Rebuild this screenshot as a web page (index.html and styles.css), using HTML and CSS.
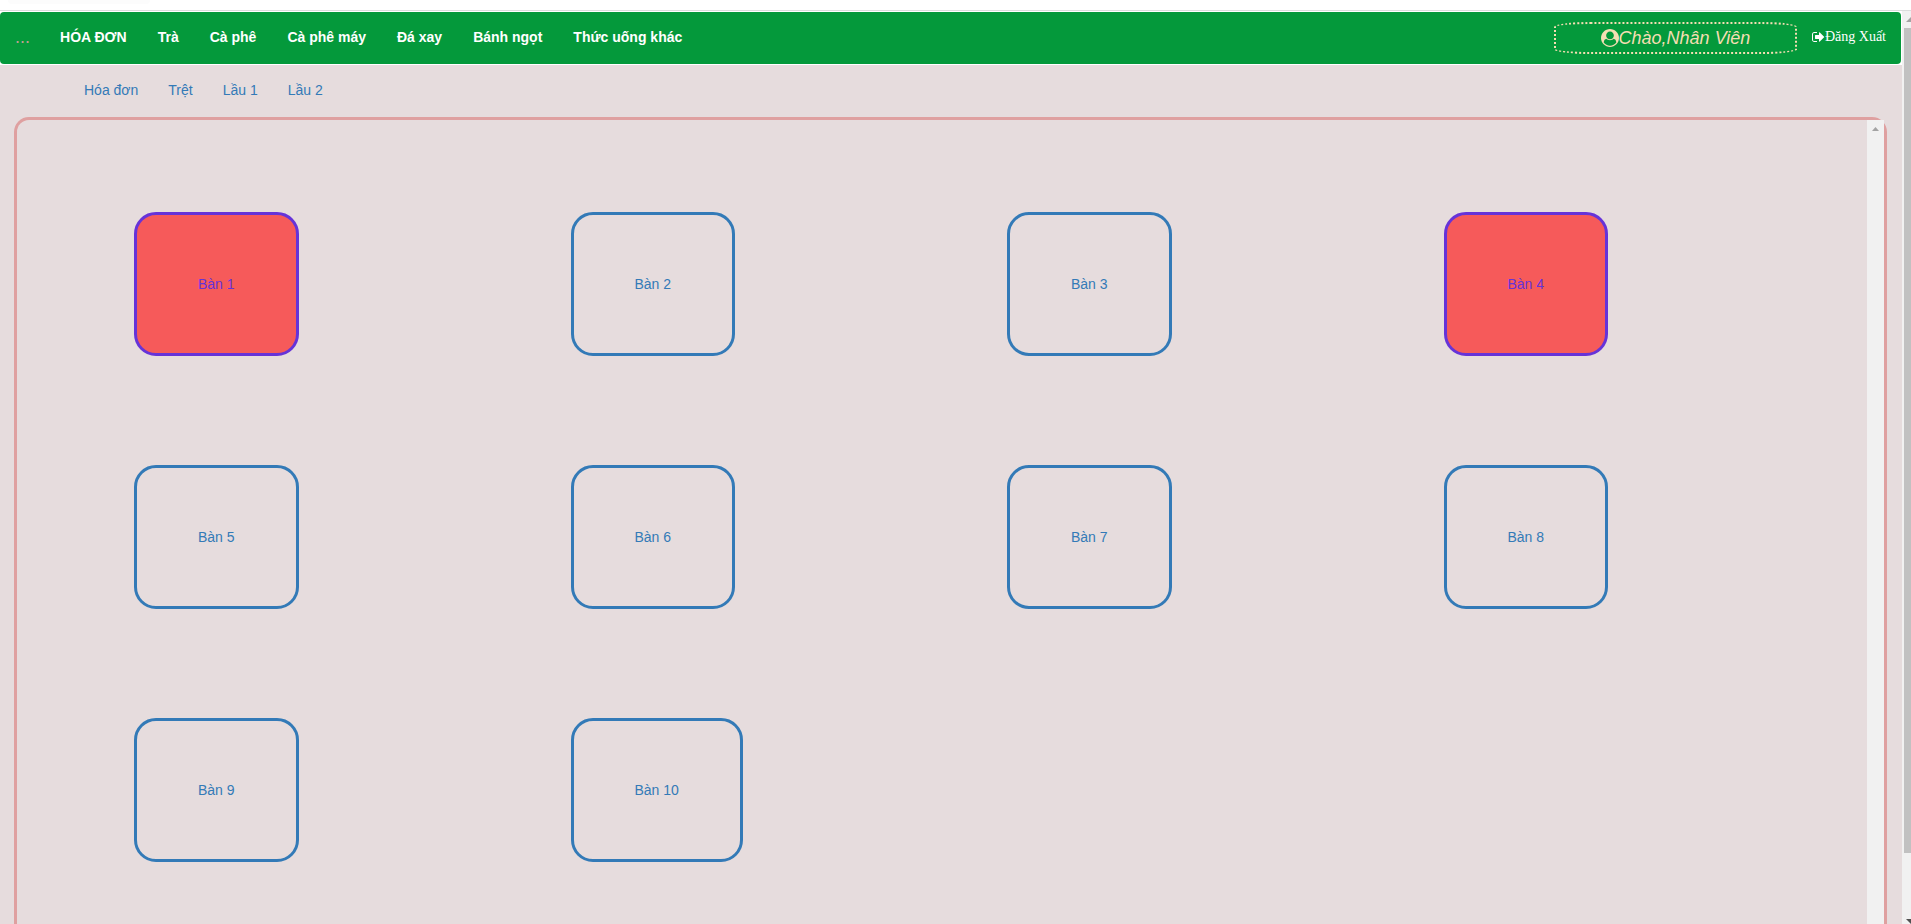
FILE: index.html
```
<!DOCTYPE html>
<html lang="vi">
<head>
    <meta charset="UTF-8">
    <meta name="viewport" content="width=device-width, initial-scale=1.0">
    <title>Nhân Viên</title>
    <link rel="stylesheet" href="styles.css">
</head>
<body>

    <div class="top-strip">
        <div class="top-tab"></div>
    </div>

    <div class="window">
        <div class="page">
            <!-- Navigation Bar -->
            <div class="navbar-wrap">
                <nav class="navbar">
                    <a class="brand" href="#">...</a>
                    <ul class="menu">
                        <li><a href="#">HÓA ĐƠN</a></li>
                        <li><a href="#">Trà</a></li>
                        <li><a href="#">Cà phê</a></li>
                        <li><a href="#">Cà phê máy</a></li>
                        <li><a href="#">Đá xay</a></li>
                        <li><a href="#">Bánh ngọt</a></li>
                        <li><a href="#">Thức uống khác</a></li>
                    </ul>
                    <div class="user">
                        <svg class="user-icon" viewBox="0 0 1792 1792"><path d="M1523 1339q-22-155-87.5-257.5t-184.5-118.5q-67 74-159.5 115.5t-195.5 41.5-195.5-41.5-159.5-115.5q-119 16-184.5 118.5t-87.5 257.5q106 150 271 237.5t356 87.5 356-87.5 271-237.5zm-243-699q0-159-112.5-271.5t-271.5-112.5-271.5 112.5-112.5 271.5 112.5 271.5 271.5 112.5 271.5-112.5 112.5-271.5zm512 256q0 182-71 347.5t-190.5 286-285.5 191.5-349 71q-182 0-348-71t-286-191-191-286-71-348 71-348 191-286 286-191 348-71 348 71 286 191 191 286 71 348z"/></svg>
                        <span>Chào,Nhân Viên</span>
                    </div>
                    <a class="logout" href="#">
                        <svg class="logout-icon" viewBox="64 0 1664 1792"><path d="M704 1440q0 4 1 20t.5 26.5-3 23.5-10 19.5-20.5 6.5h-320q-119 0-203.5-84.5t-84.5-203.5v-704q0-119 84.5-203.5t203.5-84.5h320q13 0 22.5 9.5t9.5 22.5q0 4 1 20t.5 26.5-3 23.5-10 19.5-20.5 6.5h-320q-66 0-113 47t-47 113v704q0 66 47 113t113 47h312l11.5 1 11.5 3 8 5.5 7 9 2 13.5zm928-544q0 26-19 45l-544 544q-19 19-45 19t-45-19-19-45v-288h-448q-26 0-45-19t-19-45v-384q0-26 19-45t45-19h448v-288q0-26 19-45t45-19 45 19l544 544q19 19 19 45z"/></svg>
                        <span>Đăng Xuất</span>
                    </a>
                </nav>
            </div>

            <!-- Floors -->
            <ul class="floors">
                <li><a href="#">Hóa đơn</a></li>
                <li><a href="#">Trệt</a></li>
                <li><a href="#">Lầu 1</a></li>
                <li><a href="#">Lầu 2</a></li>
            </ul>

            <!-- Tables -->
            <div class="room">
                <div class="tables">
                    <div class="cell"><a class="table busy" href="#">Bàn 1</a></div>
                    <div class="cell"><a class="table" href="#">Bàn 2</a></div>
                    <div class="cell"><a class="table" href="#">Bàn 3</a></div>
                    <div class="cell"><a class="table busy" href="#">Bàn 4</a></div>
                    <div class="cell"><a class="table" href="#">Bàn 5</a></div>
                    <div class="cell"><a class="table" href="#">Bàn 6</a></div>
                    <div class="cell"><a class="table" href="#">Bàn 7</a></div>
                    <div class="cell"><a class="table" href="#">Bàn 8</a></div>
                    <div class="cell"><a class="table" href="#">Bàn 9</a></div>
                    <div class="cell"><a class="table" href="#">Bàn 10</a></div>
                </div>
                <div class="room-scroll">
                    <svg width="7" height="4" viewBox="0 0 7 4"><path d="M0 4L3.500 0L7 4z"/></svg>
                </div>
            </div>
        </div>

        <!-- Page scroll bar -->
        <div class="page-scroll">
            <svg class="arrow-up" width="5" height="5" viewBox="0 0 5 5"><path d="M0 5L5 0V5z"/></svg>
            <div class="thumb"></div>
            <svg class="arrow-down" width="5" height="5" viewBox="0 0 5 5"><path d="M0 0H5V5z"/></svg>
        </div>
    </div>

</body>
</html>
```
FILE: styles.css
```
/* General Styles */
* {
    box-sizing: border-box;
}

body {
    font-family: "Liberation Sans", Arial, sans-serif;
    font-size: 14px;
    line-height: 20px;
    margin: 0;
    height: 100vh;
    display: flex;
    flex-direction: column;
    overflow: hidden;
    background-color: #e6dcdd;
}

a {
    color: #337ab7;
    text-decoration: none;
}

ul {
    list-style: none;
    margin: 0;
    padding: 0;
    display: flex;
}

svg {
    display: block;
    fill: currentColor;
}

/* Strip above the page */
.top-strip {
    flex: none;
    height: 11px;
    padding-left: 8px;
    background: white;
    border-bottom: 1px solid #dadcdc;
}

.top-tab {
    width: 142px;
    height: 4px;
    background: #fcfcfc;
    border-radius: 0 0 4px 4px;
}

.window {
    flex: 1;
    min-height: 0;
    display: flex;
}

.page {
    flex: 1;
    min-width: 0;
    display: flex;
    flex-direction: column;
}

/* Navigation Bar */
.navbar-wrap {
    flex: none;
    background: white;
    padding: 1px 1px 1px 0;
}

.navbar {
    display: flex;
    align-items: center;
    height: 52px;
    padding-right: 15px;
    background: #04993b;
    border-radius: 4px;
}

.brand {
    padding: 0 15px 2px;
    font-size: 18px;
    color: #c0a090;
}

.menu {
    flex: 1;
    gap: 1px;
    padding-bottom: 2px;
}

.menu a {
    display: block;
    padding: 0 15px;
    color: white;
    font-weight: bold;
}

.user {
    width: 243px;
    height: 32px;
    margin-right: 15px;
    display: flex;
    align-items: center;
    justify-content: center;
    border: 2px dotted wheat;
    border-radius: 15%;
    color: wheat;
    font-size: 18px;
    font-style: italic;
}

.user-icon {
    width: 18px;
    height: 18px;
}

.logout {
    display: flex;
    align-items: center;
    padding-bottom: 2px;
    color: white;
    font-family: "Liberation Serif", "Times New Roman", serif;
}

.logout-icon {
    width: 13px;
    height: 14px;
}

/* Floors */
.floors {
    flex: none;
    padding: 5px 69px 7px;
}

.floors a {
    display: block;
    padding: 10px 15px;
}

/* Room with the tables */
.room {
    flex: 1;
    min-height: 0;
    display: flex;
    margin: 0 15px 0 14px;
    border: 3px solid #dfa0a0;
    border-bottom: none;
    border-radius: 15px 15px 0 0;
}

.tables {
    flex: 1;
    display: grid;
    grid-template-columns: repeat(4, 1fr);
    grid-auto-rows: 144px;
    row-gap: 109px;
    padding: 92px 0 0 104px;
}

.cell {
    padding-left: 13px;
}

.table {
    display: inline-block;
    padding: 60px 61px;
    line-height: 18px;
    border: 3px solid #337ab7;
    border-radius: 22px;
}

.busy {
    background: #f65a5a;
    border-color: #6633d8;
    color: #6633d8;
}

.room-scroll {
    width: 17px;
    padding: 7px 5px;
    background: #f1f1f1;
    color: #a3a3a3;
}

/* Page scroll bar */
.page-scroll {
    flex: none;
    width: 9px;
    display: flex;
    flex-direction: column;
    align-items: flex-end;
    padding-top: 6px;
    background: #f1f1f1;
}

.arrow-up {
    color: #a3a3a3;
}

.thumb {
    width: 7px;
    height: 91%;
    margin: 6px 0 auto;
    background: #c1c1c1;
}

.arrow-down {
    color: #505050;
}
```
